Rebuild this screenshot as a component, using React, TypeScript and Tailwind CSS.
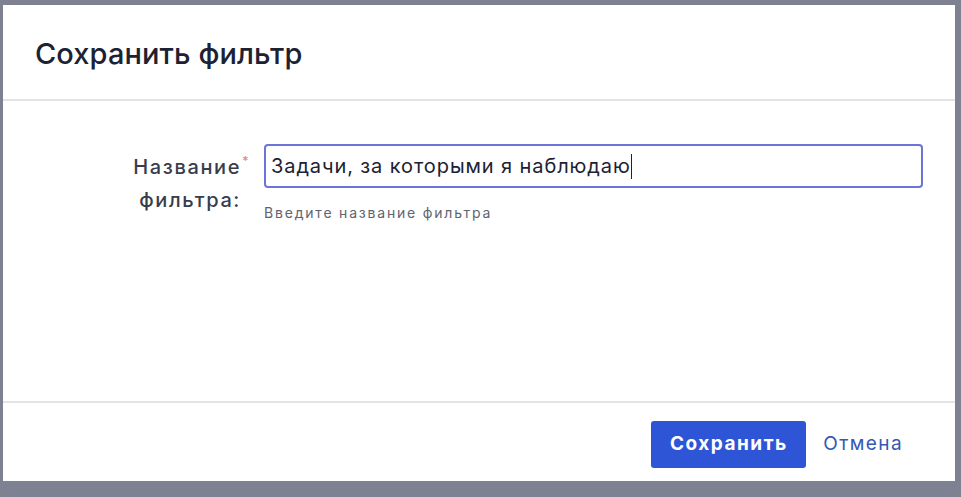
import React from "react";

export default function App() {
  return (
    <div
      className="w-[961px] h-[497px] bg-[#7d8192] pt-[5px] pl-[3px] pr-[6px] pb-[16px]"
      style={{ fontFamily: "Inter, 'Noto Sans', 'Liberation Sans', sans-serif" }}
    >
      <div className="bg-white h-full flex flex-col">
        <div className="h-[96px] flex items-center pl-[32px] border-b-2 border-[#e3e4e8]">
          <h1 className="text-[29px] font-medium text-[#1c2233] tracking-[0.1px] mt-[4px]">Сохранить фильтр</h1>
        </div>
        <div className="flex-1 flex pt-[43px]">
          <div className="w-[261px] pr-[23px] flex justify-end">
            <div className="text-right text-[20px] font-medium leading-[34px] text-[#383d4c] tracking-[1.6px] mt-[6px] relative">
              <div>
                Название<span className="absolute text-[#e0868a] text-[12px] top-[-6px] right-[-9px]">*</span>
              </div>
              <div className="-mt-[1px]">фильтра:</div>
            </div>
          </div>
          <div className="flex flex-col">
            <div className="w-[659px] h-[44px] border-2 border-[#6c74d9] rounded-[4px] flex items-center pl-[5px]">
              <span className="text-[20px] text-[#1c2233] tracking-[0.9px]">Задачи, за которыми я наблюдаю</span>
              <span className="w-[1.5px] h-[25px] bg-[#1c2233]" />
            </div>
            <div className="text-[14px] text-[#5e6370] tracking-[1.8px] mt-[16px] leading-[17px]">Введите название фильтра</div>
          </div>
        </div>
        <div className="h-[80px] border-t-2 border-[#e3e4e8] flex items-center justify-end pr-[52px]">
          <button className="w-[155px] h-[47px] bg-[#2d55d6] rounded-[3px] text-white text-[19px] font-bold tracking-[1.5px] mt-[4px]">
            Сохранить
          </button>
          <span className="ml-[17px] text-[19px] text-[#3458b6] tracking-[1.4px] mt-[4px]">Отмена</span>
        </div>
      </div>
    </div>
  );
}
